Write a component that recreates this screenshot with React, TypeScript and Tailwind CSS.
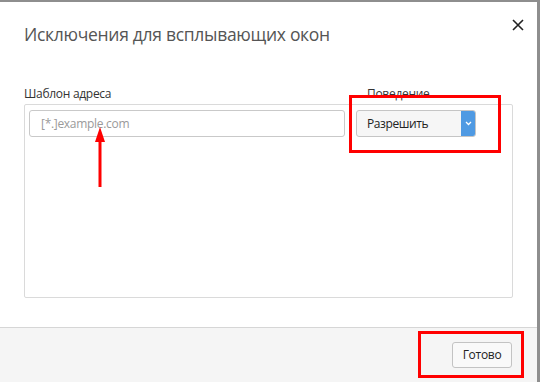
import React from "react";

export default function App() {
  return (
    <div
      className="relative w-[540px] h-[382px] bg-[#8e8e8e] pt-[2px] pr-[3px] flex flex-col overflow-hidden"
      style={{ fontFamily: '"Open Sans", "Noto Sans", sans-serif' }}
    >
      <div className="flex-1 bg-white flex flex-col">
        {/* Header */}
        <div className="relative h-[58px] pl-6 pt-[20px]">
          <h1 className="text-[17.5px] leading-[24px] text-[#555] font-normal tracking-[-0.3px]">
            Исключения для всплывающих окон
          </h1>
          <button className="absolute right-[13px] top-[16px] w-[13px] h-[13px] flex items-center justify-center">
            <svg width="12" height="12" viewBox="0 0 12 12">
              <path d="M1 1 L11 11 M11 1 L1 11" stroke="#222" strokeWidth="1.6" />
            </svg>
          </button>
        </div>

        {/* Content */}
        <div className="px-6 pt-[25px] flex-1">
          <div className="flex text-[12px] leading-[18px] text-[#333] h-[19px] tracking-[-0.3px]">
            <div className="w-[343px]">Шаблон адреса</div>
            <div>Поведение</div>
          </div>
          <div className="h-[194px] border border-[#dadada] rounded-[2px] px-[4px] pt-[5px]">
            <div className="flex items-center gap-[11px]">
              <div className="w-[316px] h-[27px] border border-[#c9c9c9] rounded-[3px] flex items-center pl-[11px] text-[12px] tracking-[-0.3px] text-[#9a9a9a]">
                [*.]example.com
              </div>
              <div className="w-[120px] h-[27px] border border-[#c5c5c5] rounded-[3px] flex overflow-hidden bg-[#f6f6f6]">
                <div className="flex-1 flex items-center pl-[10px] text-[12px] tracking-[-0.4px] text-[#222]">
                  Разрешить
                </div>
                <div className="w-[14px] bg-[#4f9ae3] flex items-center justify-center">
                  <svg width="7" height="5" viewBox="0 0 7 5">
                    <path d="M1 1 L3.5 3.5 L6 1" stroke="#fff" strokeWidth="1.3" fill="none" />
                  </svg>
                </div>
              </div>
            </div>
          </div>
        </div>

        {/* Footer */}
        <div className="h-[55px] border-t border-[#d6d6d6] bg-[#f5f5f5] flex items-center justify-end pr-[25px]">
          <button className="w-[60px] h-[26px] border border-[#c3c3c3] rounded-[3px] bg-[#f9f9f9] text-[12px] tracking-[-0.3px] text-[#222] flex items-center justify-center">
            Готово
          </button>
        </div>
      </div>

      {/* Annotations */}
      <div className="absolute left-[349px] top-[95px] w-[152px] h-[58px] border-[3px] border-[#ff0000]" />
      <div className="absolute left-[418px] top-[331px] w-[106px] h-[47px] border-[3px] border-[#ff0000]" />
      <svg className="absolute left-[93px] top-[125px]" width="14" height="64" viewBox="0 0 14 64">
        <path d="M7 62 L7 14" stroke="#f00" strokeWidth="3" />
        <path d="M7 2 L12 17 L2 17 Z" fill="#f00" />
      </svg>
    </div>
  );
}
